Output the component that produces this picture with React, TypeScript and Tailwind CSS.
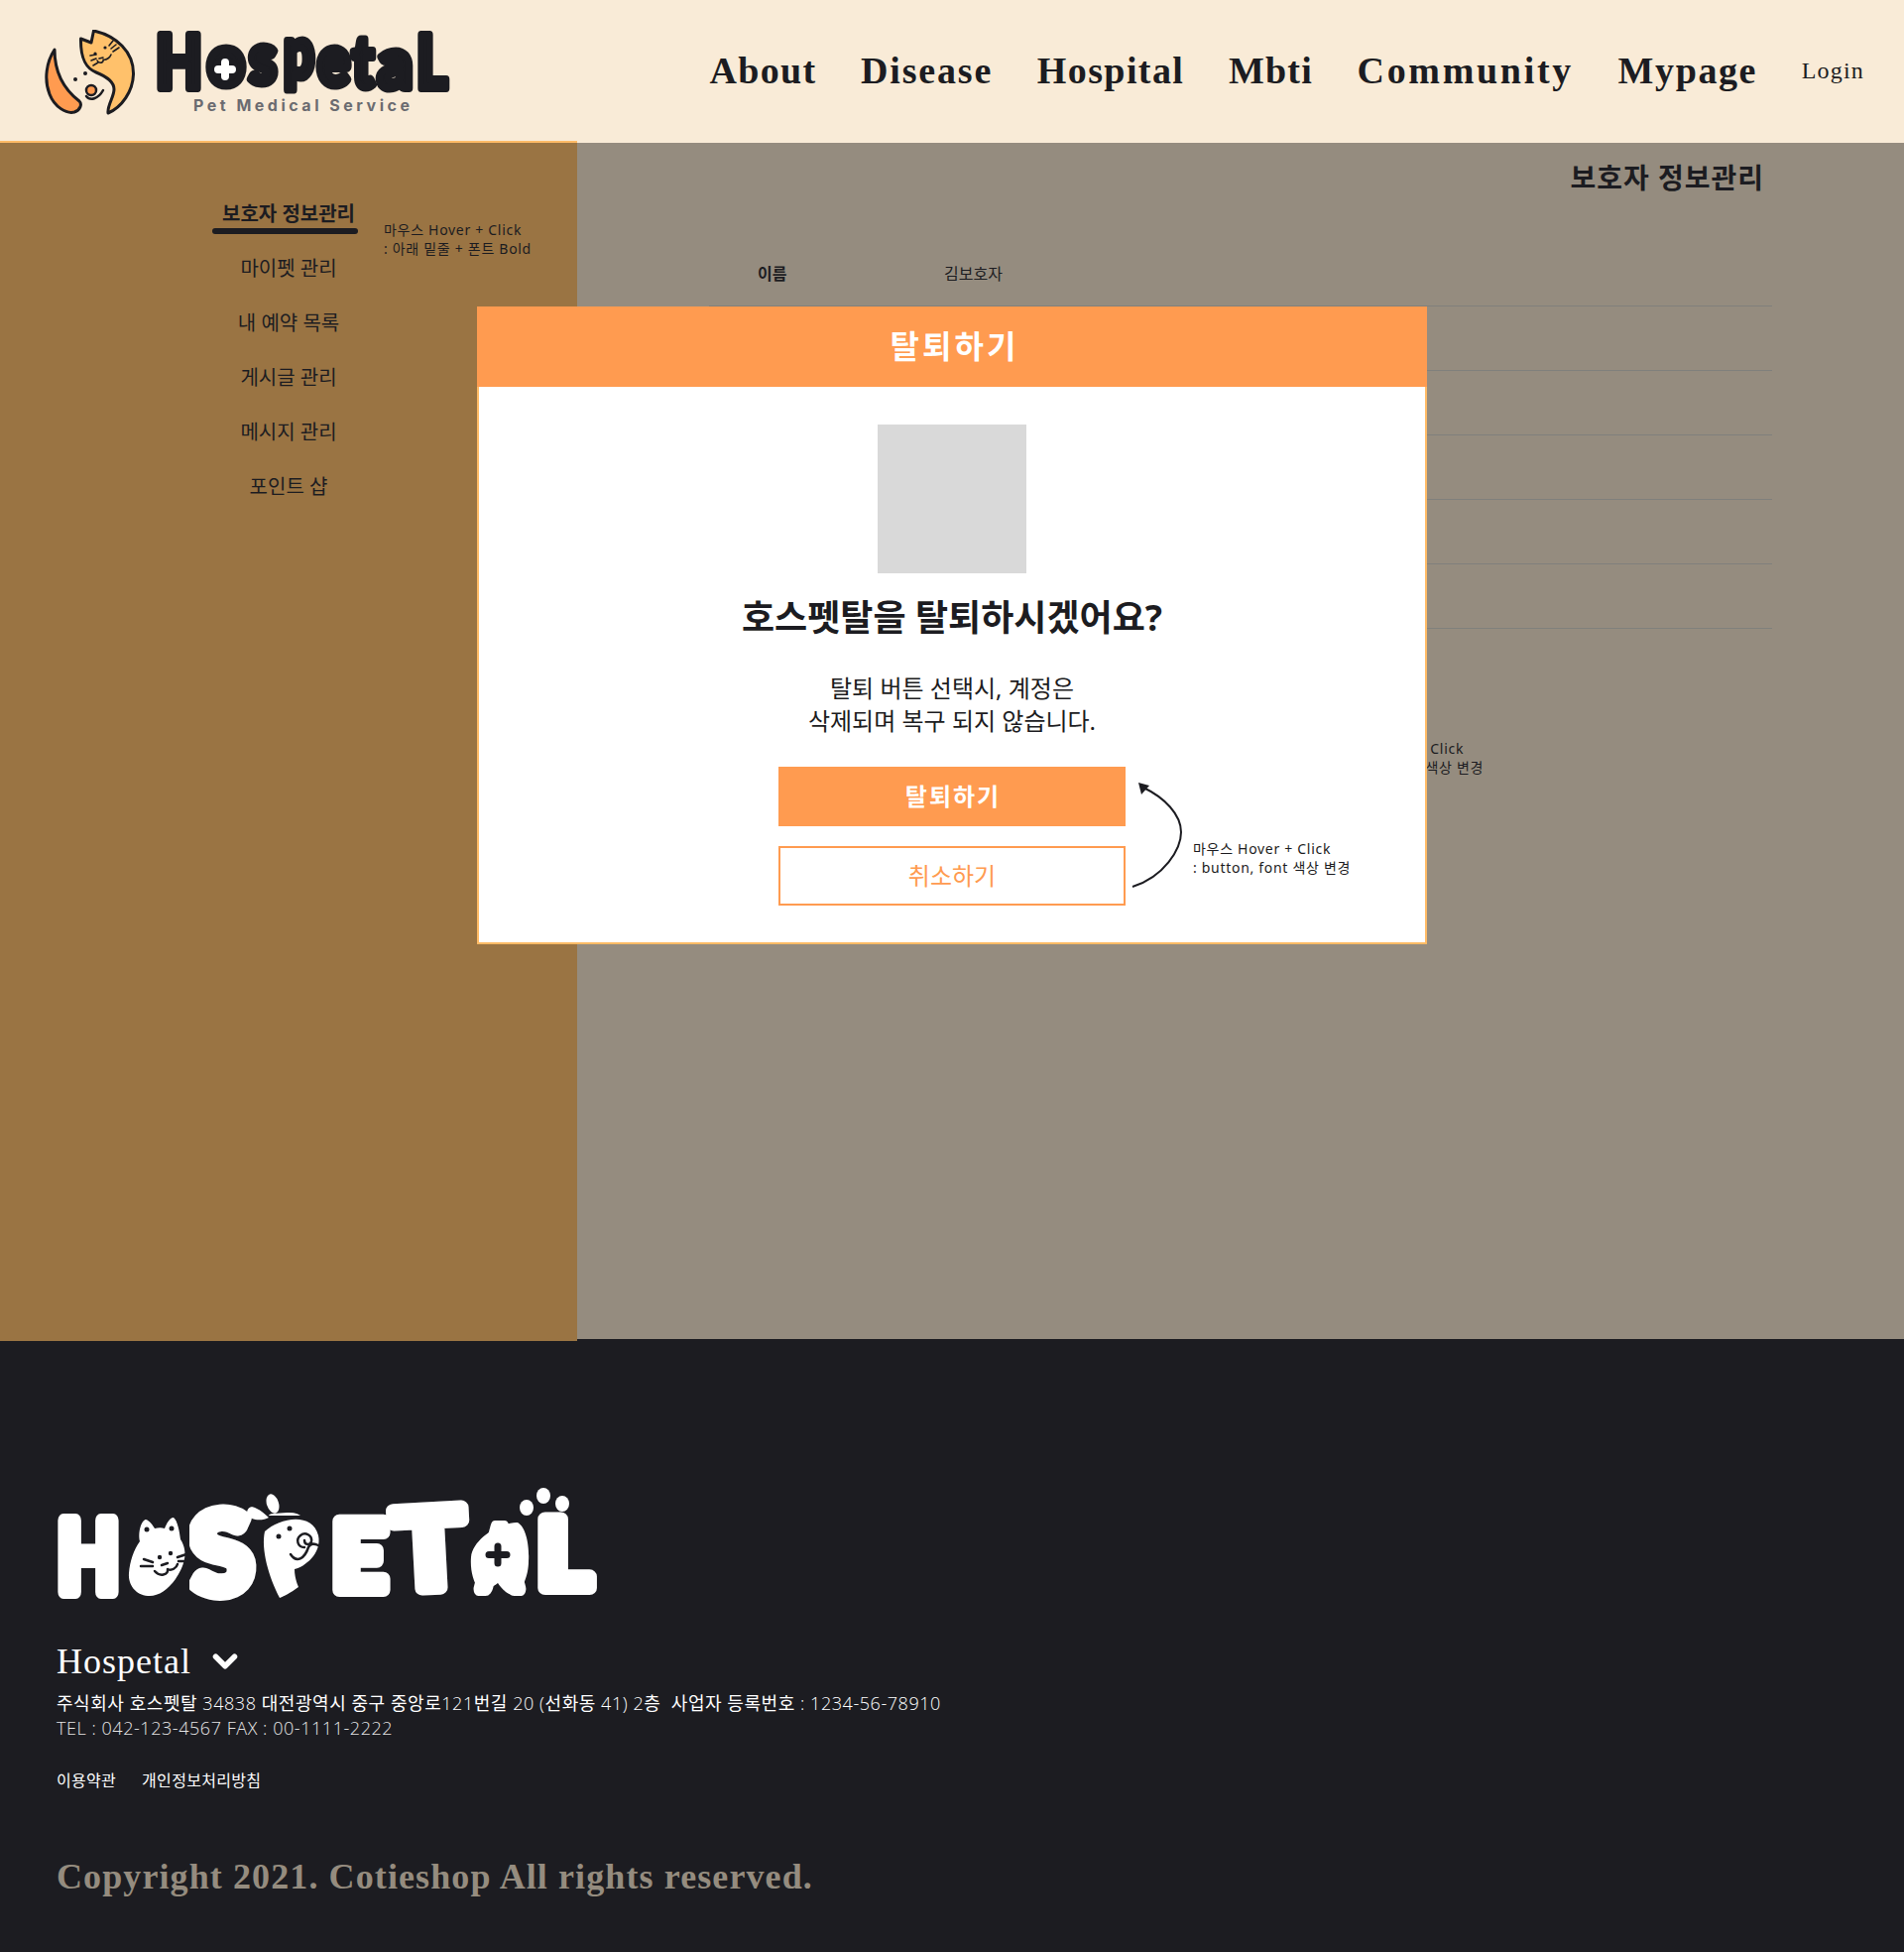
import { ChevronDown } from "lucide-react";

const SERIF = "[font-family:'Liberation_Serif',serif]";
const KR = "[font-family:'Noto_Sans','Noto_Sans_CJK_KR',sans-serif]";

const navItems = [
  { label: "About", cls: "tracking-[1.3px]" },
  { label: "Disease", cls: "tracking-[1.85px]" },
  { label: "Hospital", cls: "tracking-[1.4px]" },
  { label: "Mbti", cls: "tracking-[1.2px]" },
  { label: "Community", cls: "tracking-[2.7px]" },
  { label: "Mypage", cls: "tracking-[1.6px]" },
];

const sideItems = ["마이펫 관리", "내 예약 목록", "게시글 관리", "메시지 관리", "포인트 샵"];

// x, width, baseline and size of each letter in the logos
const headerLetters = [
  { c: "H", x: 0, w: 47, y: 56, s: 74 },
  { c: "o", x: 52, w: 38, y: 53, s: 72 },
  { c: "s", x: 94, w: 28, y: 51, s: 72 },
  { c: "p", x: 129, w: 31, y: 45, s: 72 },
  { c: "e", x: 163, w: 33, y: 53, s: 72 },
  { c: "t", x: 198, w: 22, y: 55, s: 72 },
  { c: "a", x: 224, w: 35, y: 56, s: 72 },
  { c: "L", x: 263, w: 31, y: 56, s: 74 },
];

const footerLetters = [
  { c: "H", x: 1, w: 62, y: 105, s: 99, r: 0 },
  { c: "O", x: 80, w: 44, y: 100, s: 86, r: 0 },
  { c: "S", x: 138, w: 62, y: 108, s: 112, r: -4 },
  { c: "P", x: 217, w: 41, y: 103, s: 96, r: -4 },
  { c: "E", x: 278, w: 55, y: 103, s: 96, r: 0 },
  { c: "T", x: 342, w: 72, y: 103, s: 110, r: -3 },
  { c: "A", x: 426, w: 42, y: 102, s: 86, r: 0 },
  { c: "L", x: 485, w: 54, y: 101, s: 96, r: 0 },
];

function HeaderLogo() {
  return (
    <div className="flex items-start">
      <svg width="92" height="88" viewBox="0 0 92 88" className="mt-[30px] ml-[45px] shrink-0">
        <path d="M10 20C2 32 -1 50 5 65C10 78 22 85 30 83C36 81 38 75 35 72C22 62 10 45 10 20Z" fill="#ff9b50" stroke="#1c1c21" strokeWidth="3" strokeLinejoin="round" />
        <path d="M36.500 9L47 13L49.500 1C72 6 90 22 89.500 45C89 62 78 78 64 84C63 76 70 68 70 60C70 52 62 47 52 43C42 39 36 30 36.500 9Z" fill="#ffc16b" stroke="#1c1c21" strokeWidth="3" strokeLinejoin="round" />
        <circle cx="51" cy="24" r="1.600" fill="#1c1c21" />
        <circle cx="61" cy="18" r="1.600" fill="#1c1c21" />
        <path d="M53 31C55 35 60 33 59 30M59 30C62 31 66 28 67 25M55 29L59 28M46 26L52 25M47 31L52 29M49 36L54 33M67 19L72 15M69 22L75 18M65 16L69 11" fill="none" stroke="#1c1c21" strokeWidth="1.600" strokeLinecap="round" />
        <circle cx="31" cy="50" r="2" fill="#1c1c21" />
        <circle cx="41" cy="44" r="2" fill="#1c1c21" />
        <circle cx="47" cy="61" r="5" fill="#ff9b50" stroke="#1c1c21" strokeWidth="2.500" />
        <path d="M42 67C46 72 54 70 59 61" fill="none" stroke="#1c1c21" strokeWidth="2.500" strokeLinecap="round" />
      </svg>
      <div className="ml-[20px] flex flex-col">
        <svg width="296" height="62" viewBox="0 0 296 62" className="mt-[33px] overflow-visible">
          {headerLetters.map((l) => (
            <text
              key={l.c + l.x}
              x={l.x}
              y={l.y}
              fontSize={l.s}
              textLength={l.w}
              lengthAdjust="spacingAndGlyphs"
              fill="#1c1c21"
              stroke="#1c1c21"
              strokeWidth="8"
              strokeLinejoin="round"
              className="[font-family:'Lato',sans-serif] font-black"
            >
              {l.c}
            </text>
          ))}
          <ellipse cx="70" cy="37" rx="13" ry="13" fill="#1c1c21" />
          <path d="M70 30V44M63 37H77" stroke="#ffffff" strokeWidth="8" strokeLinecap="round" />
        </svg>
        <div className="ml-[38px] h-[22px] leading-[22px] text-[16px] font-bold tracking-[3.5px] text-[#6b6b70] whitespace-nowrap [font-family:'Inter',sans-serif]">
          Pet Medical Service
        </div>
      </div>
    </div>
  );
}

function FooterLogo() {
  return (
    <svg width="548" height="120" viewBox="0 0 548 120" className="block overflow-visible">
      {footerLetters.map((l) => (
        <text
          key={l.c + l.x}
          x={l.x}
          y={l.y}
          fontSize={l.s}
          textLength={l.w}
          lengthAdjust="spacingAndGlyphs"
          fill="#ffffff"
          stroke="#ffffff"
          strokeWidth="14"
          strokeLinejoin="round"
          transform={`rotate(${l.r} ${l.x} ${l.y})`}
          className="[font-family:'Lato',sans-serif] font-black"
        >
          {l.c}
        </text>
      ))}
      {/* cover the O with the cat */}
      <rect x="70" y="20" width="64" height="96" fill="#1c1c21" />
      <path d="M84 54C82 46 85 33 90 32C94 33 97 38 99 41C103 40 106 40 109 41C111 36 114 30 118 30C122 33 124 44 125 52C134 66 128 80 120 92C112 103 102 110 92 109C80 108 72 98 73 86C74 74 78 62 84 54Z" fill="#ffffff" />
      <circle cx="91" cy="42" r="2.500" fill="#1c1c21" />
      <circle cx="116" cy="41" r="2.500" fill="#1c1c21" />
      <circle cx="104" cy="70" r="2.200" fill="#1c1c21" />
      <circle cx="115" cy="66" r="2.200" fill="#1c1c21" />
      <path d="M99 84C104 90 113 88 112 82M112 82C116 84 121 81 122 77M106 78L112 76M88 72L97 75M85 79L97 79M122 70L131 67M123 74L131 74" fill="none" stroke="#1c1c21" strokeWidth="2.500" strokeLinecap="round" />
      {/* cover the P with the dog */}
      <rect x="206" y="28" width="62" height="90" fill="#1c1c21" />
      <path d="M210 44C225 30 258 24 264 48C268 66 250 80 240 82C240 92 244 100 244 100C236 106 230 109 225 111C214 90 206 62 210 44Z" fill="#ffffff" />
      <path d="M192 26C192 20 196 18 200 20C205 22 210 26 214 30C207 34 194 33 192 26Z" fill="#ffffff" />
      <ellipse cx="218" cy="16" rx="6" ry="10" transform="rotate(-18 218 16)" fill="#ffffff" />
      <circle cx="224" cy="49" r="2.500" fill="#1c1c21" />
      <circle cx="235" cy="41" r="2.500" fill="#1c1c21" />
      <path d="M250 60C243 60 241 52 246 48C251 44 258 48 257 54C256 58 250 58 250 53M236 67C242 76 250 72 254 60C256 56 260 56 264 58" fill="none" stroke="#1c1c21" strokeWidth="2.500" strokeLinecap="round" />
      {/* A with the cross */}
      <path d="M418 70C420 50 450 34 465 35C474 40 477 60 476 74C476 88 470 104 461 108C455 108 449 102 445 96C438 102 428 104 425 101C420 94 417 82 418 70Z" fill="#ffffff" />
      <path d="M445 59V76M436 67.500H454" stroke="#1c1c21" strokeWidth="7" strokeLinecap="round" />
      {/* paw */}
      <ellipse cx="474" cy="20" rx="7" ry="8" fill="#ffffff" />
      <ellipse cx="491" cy="8" rx="7" ry="8" fill="#ffffff" />
      <ellipse cx="510" cy="16" rx="7" ry="8" fill="#ffffff" />
    </svg>
  );
}

function Note({ className }: { className: string }) {
  return (
    <div className={`absolute text-[14px] leading-[19px] tracking-[0.7px] text-[#1c1c21] whitespace-nowrap ${KR} ${className}`}>
      <div>마우스 Hover + Click</div>
      <div>: button, font 색상 변경</div>
    </div>
  );
}

export default function App() {
  return (
    <div className={`w-full bg-[#1c1c21] ${KR}`}>
      {/* Header */}
      <header className="relative h-[144px] bg-[#f9ebd7] flex justify-between">
        <HeaderLogo />
        <nav className={`flex items-center gap-[44.6px] pr-[40px] pb-[2px] ${SERIF}`}>
          {navItems.map((item) => (
            <a key={item.label} className={`text-[38px] font-bold text-[#1c1c21] ${item.cls}`}>
              {item.label}
            </a>
          ))}
          <a className="text-[24px] text-[#1c1c21] tracking-[1.2px]">Login</a>
        </nav>
        <div className="absolute left-0 bottom-0 w-[582px] h-[2px] bg-[#ffbb66]" />
      </header>

      {/* Dimmed page */}
      <main className="relative flex h-[1206px]">
        <aside className="relative w-[582px] h-[1208px] shrink-0 bg-[#9a7443] pt-[44px]">
          <ul className="text-center text-[20px] text-[#1c1c21]">
            <li className="relative h-[55px] flex items-center justify-center font-bold">
              보호자 정보관리
              <span className="absolute left-[214px] top-[42px] w-[147px] h-[6px] rounded-full bg-[#1c1c21]" />
            </li>
            {sideItems.map((s) => (
              <li key={s} className="h-[55px] flex items-center justify-center">
                {s}
              </li>
            ))}
          </ul>
          <div className="absolute left-[387px] top-[78px] text-[14px] leading-[19px] tracking-[0.7px] text-[#1c1c21] whitespace-nowrap">
            <div>마우스 Hover + Click</div>
            <div>: 아래 밑줄 + 폰트 Bold</div>
          </div>
        </aside>

        <section className="relative flex-1 bg-[#958c7f]">
          <div className="h-[70px] flex items-center justify-end pr-[141px] text-[28px] font-bold tracking-[1px] text-[#1c1c21]">
            보호자 정보관리
          </div>
          <div className="mt-[30px] ml-[133px] mr-[133px]">
            <div className="h-[65px] flex items-center border-b border-[#80807c] pl-[49px] text-[16px] text-[#1c1c21]">
              <span className="w-[188px] font-bold">이름</span>
              <span>김보호자</span>
            </div>
            {[0, 1, 2, 3, 4].map((i) => (
              <div key={i} className="h-[65px] border-b border-[#80807c]" />
            ))}
          </div>
          <Note className="left-[755px] top-[601px]" />
        </section>

        {/* Modal */}
        <div className="absolute left-[481px] top-[165px] w-[958px] h-[643px] flex flex-col">
          <div className="h-[81px] bg-[#ff9b50] flex items-center justify-center pl-[5px] pb-[2px] text-[32px] font-bold text-white tracking-[3px]">
            탈퇴하기
          </div>
          <div className="relative flex-1 bg-white border-x-2 border-b-2 border-[#ffbb66] flex flex-col items-center pt-[38px]">
            <div className="w-[150px] h-[150px] bg-[#d9d9d9]" />
            <h2 className="mt-[20px] h-[50px] leading-[50px] text-[36px] font-bold text-[#1c1c21]">
              호스펫탈을 탈퇴하시겠어요?
            </h2>
            <p className="mt-[29px] text-center text-[24px] leading-[33px] text-[#1c1c21]">
              탈퇴 버튼 선택시, 계정은
              <br />
              삭제되며 복구 되지 않습니다.
            </p>
            <button className="mt-[30px] w-[350px] h-[60px] pl-[2px] bg-[#ff9b50] text-white text-[24px] font-bold tracking-[2px]">
              탈퇴하기
            </button>
            <button className="mt-[20px] w-[350px] h-[60px] bg-white border-2 border-[#ff9b50] text-[#ff9b50] text-[24px]">
              취소하기
            </button>
            <svg width="55" height="112" viewBox="0 0 55 112" className="absolute left-[656px] top-[396px]">
              <path d="M3 108C35 98 52 70 52 53C52 35 35 18 14 8" fill="none" stroke="#1c1c21" strokeWidth="2" />
              <path d="M9 3L20 6L12 15Z" fill="#1c1c21" />
            </svg>
            <Note className="left-[720px] top-[456px]" />
          </div>
        </div>
      </main>

      {/* Footer */}
      <footer className="h-[618px] pl-[57px] pt-[150px] text-white">
        <FooterLogo />
        <div className={`mt-[35px] h-[40px] flex items-center gap-[15px] text-[36px] tracking-[1px] ${SERIF}`}>
          <span>Hospetal</span>
          <ChevronDown className="w-[38px] h-[38px]" strokeWidth={3.500} />
        </div>
        <div className="mt-[10px] text-[18px] leading-[25px] tracking-[0.55px] [font-family:'Open_Sans','Noto_Sans_CJK_KR',sans-serif]">
          <div className="whitespace-nowrap">
            주식회사 호스펫탈 <span className="font-light">34838</span> 대전광역시 중구 중앙로
            <span className="font-light">121</span>번길 <span className="font-light">20 (</span>선화동 <span className="font-light">41) 2</span>층&nbsp; 사업자 등록번호 <span className="font-light">: 1234-56-78910</span>
          </div>
          <div className="font-light text-[#e5e5e5]">TEL : 042-123-4567 FAX : 00-1111-2222</div>
        </div>
        <div className="mt-[30px] h-[20px] flex items-center gap-[26px] text-[16px] tracking-[0.3px]">
          <a>이용약관</a>
          <a>개인정보처리방침</a>
        </div>
        <div className={`mt-[62px] h-[50px] flex items-center text-[36px] font-bold text-[#958c7f] tracking-[1.1px] ${SERIF}`}>
          Copyright 2021. Cotieshop All rights reserved.
        </div>
      </footer>
    </div>
  );
}
